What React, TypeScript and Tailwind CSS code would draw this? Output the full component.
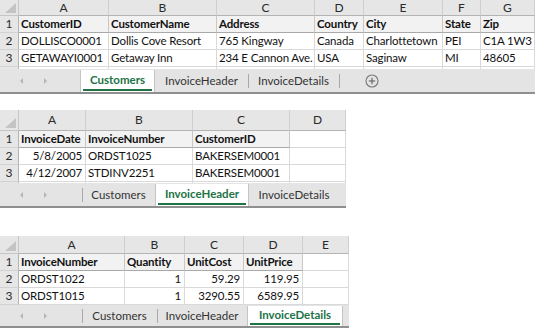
import React from "react";

type Column = { letter: string; w: string; right?: boolean };
type BarItem =
  | { kind: "nav"; w: string }
  | { kind: "tab"; label: string; w: string; active?: boolean }
  | { kind: "sep" }
  | { kind: "plus"; w: string };

type SheetProps = {
  width: string;
  cols: Column[];
  rows: string[][];
  filled: number;
  headerH: string;
  strip?: string;
  barH: string;
  bar: BarItem[];
  fillRest?: boolean;
};

function CornerCell({ h }: { h: string }) {
  return (
    <div className={`w-[19px] ${h} shrink-0 bg-[#e6e6e6] border-r border-b border-[#c6c6c6] flex items-end justify-end pr-[2px] pb-[2px]`}>
      <svg width="11" height="10" viewBox="0 0 11 10">
        <polygon points="11,0 11,10 0,10" fill="#c4c4c4" />
      </svg>
    </div>
  );
}

function NavArrows() {
  return (
    <div className="flex items-center h-full">
      <svg width="60" height="10" viewBox="0 0 60 10" className="ml-[18px]">
        <polygon points="5,2 2,5 5,8" fill="#b5b5b5" />
        <polygon points="26,2 29,5 26,8" fill="#b5b5b5" />
      </svg>
    </div>
  );
}

function PlusIcon() {
  return (
    <svg width="14" height="14" viewBox="0 0 14 14">
      <circle cx="7" cy="7" r="6" fill="none" stroke="#7a7a7a" strokeWidth="1.1" />
      <line x1="7" y1="3.8" x2="7" y2="10.2" stroke="#6a6a6a" strokeWidth="1.2" />
      <line x1="3.8" y1="7" x2="10.2" y2="7" stroke="#6a6a6a" strokeWidth="1.2" />
    </svg>
  );
}

function TabBar({ items, h, fill }: { items: BarItem[]; h: string; fill?: boolean }) {
  return (
    <div className={`flex ${h} bg-[#e4e4e4] border-b-2 border-[#8f8f8f]`}>
      {items.map((it, i) => {
        if (it.kind === "nav") {
          return (
            <div key={i} className={`${it.w} shrink-0`}>
              <NavArrows />
            </div>
          );
        }
        if (it.kind === "sep") {
          return (
            <div key={i} className="w-0 flex items-center">
              <div className="w-px h-[14px] bg-[#a8a8a8] shrink-0" />
            </div>
          );
        }
        if (it.kind === "plus") {
          return (
            <div key={i} className={`${it.w} shrink-0 flex items-center justify-center`}>
              <PlusIcon />
            </div>
          );
        }
        if (it.active) {
          return (
            <div
              key={i}
              className={`${it.w} shrink-0 mt-[1px] bg-white border-x border-[#c4c4c4] flex flex-col`}
            >
              <div className="flex-1 flex items-center justify-center font-bold text-[#217346]">
                {it.label}
              </div>
              <div className="h-[2px] bg-[#217346] mx-[2px] mb-[1px]" />
            </div>
          );
        }
        return (
          <div key={i} className={`${it.w} shrink-0 flex items-center justify-center text-[#333]`}>
            {it.label}
          </div>
        );
      })}
      {fill ? <div className="flex-1" /> : null}
    </div>
  );
}

function Sheet({ width, cols, rows, filled, headerH, strip, barH, bar, fillRest }: SheetProps) {
  return (
    <div className={`${width} shrink-0 overflow-hidden`}>
      {/* column letters */}
      <div className="flex">
        <CornerCell h={headerH} />
        {cols.map((c) => (
          <div
            key={c.letter}
            className={`${c.w} ${headerH} shrink-0 bg-[#e6e6e6] border-r border-b border-r-[#cfcfcf] border-b-[#b4b4b4] flex items-center justify-center text-[12px] text-[#2a2a2a]`}
          >
            {c.letter}
          </div>
        ))}
      </div>
      {/* cell rows */}
      {rows.map((r, ri) => (
        <div key={ri} className="flex h-[17px]">
          <div className="w-[19px] shrink-0 bg-[#e6e6e6] border-r border-b border-r-[#b4b4b4] border-b-[#d2d2d2] flex items-center justify-center text-[12px] text-[#2a2a2a]">
            {ri + 1}
          </div>
          {cols.map((c, ci) => {
            const head = ri === 0 && ci < filled;
            return (
              <div
                key={c.letter}
                className={`${c.w} shrink-0 border-r border-b overflow-hidden whitespace-nowrap flex items-center tracking-[-0.15px] ${
                  head
                    ? "bg-[#f2f2f2] font-bold border-r-[#c8c8c8] border-b-[#a9a9a9] pl-[2px]"
                    : "bg-white border-[#d9d9d9]"
                } ${!head && c.right ? "justify-end pr-[3px]" : "pl-[2px]"} text-[#111]`}
              >
                {r[ci] ?? ""}
              </div>
            );
          })}
        </div>
      ))}
      {strip ? (
        <div className={`flex ${strip}`}>
          <div className="w-[19px] shrink-0 bg-[#e6e6e6] border-r border-[#b4b4b4]" />
          {cols.map((c) => (
            <div key={c.letter} className={`${c.w} shrink-0 border-r border-[#d9d9d9]`} />
          ))}
        </div>
      ) : null}
      <TabBar items={bar} h={barH} fill={fillRest} />
    </div>
  );
}

const customerCols: Column[] = [
  { letter: "A", w: "w-[90px]" },
  { letter: "B", w: "w-[108px]" },
  { letter: "C", w: "w-[98px]" },
  { letter: "D", w: "w-[49px]" },
  { letter: "E", w: "w-[79px]" },
  { letter: "F", w: "w-[38px]" },
  { letter: "G", w: "w-[54px]" },
];

const customerRows = [
  ["CustomerID", "CustomerName", "Address", "Country", "City", "State", "Zip"],
  ["DOLLISCO0001", "Dollis Cove Resort", "765 Kingway", "Canada", "Charlottetown", "PEI", "C1A 1W3"],
  ["GETAWAYI0001", "Getaway Inn", "234 E Cannon Ave.", "USA", "Saginaw", "MI", "48605"],
];

const headerCols: Column[] = [
  { letter: "A", w: "w-[67px]", right: true },
  { letter: "B", w: "w-[107px]" },
  { letter: "C", w: "w-[97px]" },
  { letter: "D", w: "w-[56px]" },
];

const headerRows = [
  ["InvoiceDate", "InvoiceNumber", "CustomerID", ""],
  ["5/8/2005", "ORDST1025", "BAKERSEM0001", ""],
  ["4/12/2007", "STDINV2251", "BAKERSEM0001", ""],
];

const detailCols: Column[] = [
  { letter: "A", w: "w-[106px]" },
  { letter: "B", w: "w-[60px]", right: true },
  { letter: "C", w: "w-[59px]", right: true },
  { letter: "D", w: "w-[59px]", right: true },
  { letter: "E", w: "w-[46px]" },
];

const detailRows = [
  ["InvoiceNumber", "Quantity", "UnitCost", "UnitPrice", ""],
  ["ORDST1022", "1", "59.29", "119.95", ""],
  ["ORDST1015", "1", "3290.55", "6589.95", ""],
];

export default function App() {
  return (
    <div className="w-[535px] h-[331px] bg-white overflow-hidden flex flex-col text-[11.5px] leading-none font-[Lato,'Noto_Sans',sans-serif]">
      <Sheet
        width="w-[535px]"
        cols={customerCols}
        rows={customerRows}
        filled={7}
        headerH="h-[16px]"
        strip="h-[2px]"
        barH="h-[25px]"
        fillRest
        bar={[
          { kind: "nav", w: "w-[80px]" },
          { kind: "tab", label: "Customers", w: "w-[75px]", active: true },
          { kind: "tab", label: "InvoiceHeader", w: "w-[93px]" },
          { kind: "sep" },
          { kind: "tab", label: "InvoiceDetails", w: "w-[91px]" },
          { kind: "sep" },
          { kind: "plus", w: "w-[66px]" },
        ]}
      />
      <div className="h-[16px] shrink-0" />
      <Sheet
        width="w-[346px]"
        cols={headerCols}
        rows={headerRows}
        filled={3}
        headerH="h-[21px]"
        strip="h-[1px]"
        barH="h-[25px]"
        bar={[
          { kind: "nav", w: "w-[82px]" },
          { kind: "sep" },
          { kind: "tab", label: "Customers", w: "w-[73px]" },
          { kind: "tab", label: "InvoiceHeader", w: "w-[94px]", active: true },
          { kind: "tab", label: "InvoiceDetails", w: "w-[90px]" },
        ]}
      />
      <div className="h-[28px] shrink-0" />
      <Sheet
        width="w-[349px]"
        cols={detailCols}
        rows={detailRows}
        filled={4}
        headerH="h-[18px]"
        barH="h-[23px]"
        fillRest
        bar={[
          { kind: "nav", w: "w-[82px]" },
          { kind: "sep" },
          { kind: "tab", label: "Customers", w: "w-[75px]" },
          { kind: "sep" },
          { kind: "tab", label: "InvoiceHeader", w: "w-[90px]" },
          { kind: "tab", label: "InvoiceDetails", w: "w-[96px]", active: true },
        ]}
      />
    </div>
  );
}
